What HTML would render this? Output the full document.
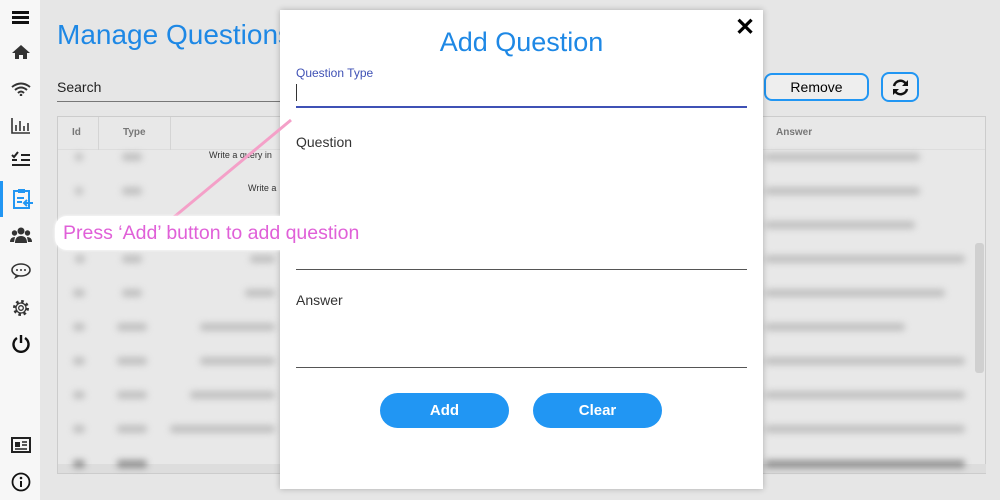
<!DOCTYPE html>
<html><head><style>
*{margin:0;padding:0;box-sizing:border-box}
body{width:1000px;height:500px;overflow:hidden;background:#e6e6e6;font-family:"Liberation Sans",sans-serif;position:relative}
.side{position:absolute;left:0;top:0;width:40px;height:500px;background:#f7f7f7}
.blur{position:absolute;height:8px;background:#b4b4b4;filter:blur(3.5px);border-radius:3px;opacity:.75}
.modal{position:absolute;left:280px;top:10px;width:483px;height:479px;background:#fff;box-shadow:0 0 6px rgba(0,0,0,.25)}
.lbl{position:absolute;left:16px;font-size:14px;color:#333}
.line{position:absolute;left:16px;width:451px;height:1px;background:#555}
.btn{position:absolute;top:383px;width:129px;height:35px;border-radius:18px;background:#2196f3;color:#fff;font-weight:bold;font-size:15px;text-align:center;line-height:36px}
</style></head><body>
<div class="side">
<div style="position:absolute;left:12px;top:11px;width:17px;height:3px;background:#111;box-shadow:0 5px 0 #111,0 10px 0 #111"></div>
<svg style="position:absolute;left:11px;top:44px" width="20" height="16" viewBox="0 0 20 16"><path d="M10 1 L1 9 H4 V15 H8 V11 H12 V15 H16 V9 H19 Z" fill="#333"/></svg>
<svg style="position:absolute;left:11px;top:82px" width="20" height="14" viewBox="0 0 20 14"><path d="M1 5 Q10 -2 19 5 M4 8 Q10 3 16 8 M7 11 Q10 8 13 11" stroke="#333" stroke-width="2" fill="none"/><circle cx="10" cy="13" r="1.3" fill="#333"/></svg>
<svg style="position:absolute;left:11px;top:117px" width="20" height="17" viewBox="0 0 20 17"><path d="M1 1 V16 H19 M5 8 V14 M9 4 V14 M13 9 V14 M17 6 V14" stroke="#333" stroke-width="1.6" fill="none"/></svg>
<svg style="position:absolute;left:11px;top:151px" width="20" height="16" viewBox="0 0 20 16"><path d="M1 4 L3 6 L7 1 M10 4 H19 M10 9 H19 M1 14 H19 M10 14 H19" stroke="#222" stroke-width="2" fill="none"/><path d="M1 9 H6" stroke="#222" stroke-width="2"/></svg>
<div style="position:absolute;left:0;top:181px;width:3px;height:36px;background:#2196f3"></div>
<svg style="position:absolute;left:12px;top:188px" width="22" height="22" viewBox="0 0 22 22"><rect x="2" y="3" width="15" height="17" fill="none" stroke="#2196f3" stroke-width="2"/><rect x="6" y="1" width="7" height="4" fill="#2196f3"/><path d="M5 10 H12 M5 14 H10 M21 15 H12 M15 12 L12 15 L15 18" stroke="#2196f3" stroke-width="2" fill="none"/></svg>
<svg style="position:absolute;left:10px;top:226px" width="22" height="18" viewBox="0 0 22 18"><circle cx="11" cy="5" r="3.5" fill="#333"/><circle cx="4.5" cy="7" r="2.7" fill="#333"/><circle cx="17.5" cy="7" r="2.7" fill="#333"/><path d="M5 17 Q5 10 11 10 Q17 10 17 17Z M0 16 Q0 11 5 11 L4 16Z M22 16 Q22 11 17 11 L18 16Z" fill="#333"/></svg>
<svg style="position:absolute;left:11px;top:263px" width="20" height="17" viewBox="0 0 20 17"><ellipse cx="10" cy="7" rx="9" ry="6" fill="none" stroke="#333" stroke-width="1.6"/><path d="M5 12 L3 16 L9 13" fill="#333"/><circle cx="6" cy="7" r="1" fill="#333"/><circle cx="10" cy="7" r="1" fill="#333"/><circle cx="14" cy="7" r="1" fill="#333"/></svg>
<svg style="position:absolute;left:11px;top:298px" width="20" height="20" viewBox="0 0 20 20"><circle cx="10" cy="10" r="6.5" fill="none" stroke="#333" stroke-width="3" stroke-dasharray="2.5 2.6"/><circle cx="10" cy="10" r="5" fill="none" stroke="#333" stroke-width="1.3"/><circle cx="10" cy="10" r="2.3" fill="none" stroke="#333" stroke-width="1.3"/></svg>
<svg style="position:absolute;left:11px;top:334px" width="20" height="19" viewBox="0 0 20 19"><path d="M6 4 A7.5 7.5 0 1 0 14 4" stroke="#111" stroke-width="2.4" fill="none"/><path d="M10 1 V9" stroke="#111" stroke-width="2.4"/></svg>
<svg style="position:absolute;left:11px;top:437px" width="20" height="16" viewBox="0 0 20 16"><rect x="1" y="1" width="18" height="14" fill="none" stroke="#222" stroke-width="2"/><rect x="4" y="5" width="5" height="5" fill="#222"/><path d="M11 5 H16 M11 8 H16 M4 12 H16" stroke="#222" stroke-width="1.5"/></svg>
<svg style="position:absolute;left:11px;top:472px" width="20" height="20" viewBox="0 0 20 20"><circle cx="10" cy="10" r="8.5" fill="none" stroke="#111" stroke-width="1.8"/><circle cx="10" cy="6" r="1.3" fill="#111"/><path d="M10 9 V15" stroke="#111" stroke-width="2"/></svg>
</div>
<div style="position:absolute;left:57px;top:19px;font-size:28px;color:#1e88e5">Manage Questions</div>
<div style="position:absolute;left:57px;top:79px;font-size:14px;color:#222">Search</div>
<div style="position:absolute;left:57px;top:101px;width:230px;height:1px;background:#777"></div>
<div style="position:absolute;left:764px;top:73px;width:105px;height:28px;border:2px solid #2196f3;border-radius:8px;background:#eee;text-align:center;line-height:24px;font-size:14px">Remove</div>
<div style="position:absolute;left:881px;top:72px;width:38px;height:30px;border:2px solid #2196f3;border-radius:8px;background:#eee"><svg style="position:absolute;left:9px;top:5px" width="17" height="17" viewBox="0 0 17 17"><path d="M2 7 A6.5 6.5 0 0 1 14 5 M15 10 A6.5 6.5 0 0 1 3 12" stroke="#111" stroke-width="2.5" fill="none"/><path d="M16 1 V7 H10Z M1 16 V10 H7Z" fill="#111"/></svg></div>
<div style="position:absolute;left:57px;top:116px;width:929px;height:358px;border:1px solid #ccc;background:#e8e8e8">
<div style="position:absolute;left:0;top:0;width:100%;height:33px;border-bottom:1px solid #ddd"></div>
<div style="position:absolute;left:40px;top:0;width:1px;height:33px;background:#d4d4d4"></div>
<div style="position:absolute;left:112px;top:0;width:1px;height:33px;background:#d4d4d4"></div>
<div style="position:absolute;left:14px;top:10px;font-size:10px;font-weight:bold;color:#777">Id</div>
<div style="position:absolute;left:65px;top:10px;font-size:10px;font-weight:bold;color:#777">Type</div>
<div style="position:absolute;left:718px;top:10px;font-size:10px;font-weight:bold;color:#777">Answer</div>
<div style="position:absolute;left:917px;top:126px;width:9px;height:130px;background:#d0d0d0;border-radius:3px"></div>
<div style="position:absolute;left:0;top:347px;width:928px;height:9px;background:#ddd"></div>
</div>
<div style="position:absolute;left:209px;top:150px;font-size:9px;color:#333">Write a query in</div>
<div style="position:absolute;left:248px;top:183px;font-size:9px;color:#333">Write a</div>
<div class="blur" style="left:75px;top:153px;width:8px"></div><div class="blur" style="left:122px;top:153px;width:20px"></div><div class="blur" style="left:765px;top:153px;width:155px"></div>
<div class="blur" style="left:75px;top:187px;width:8px"></div><div class="blur" style="left:122px;top:187px;width:20px"></div><div class="blur" style="left:765px;top:187px;width:155px"></div>
<div class="blur" style="left:765px;top:221px;width:150px"></div>
<div class="blur" style="left:75px;top:255px;width:10px"></div><div class="blur" style="left:122px;top:255px;width:20px"></div><div class="blur" style="left:250px;top:255px;width:25px"></div><div class="blur" style="left:765px;top:255px;width:200px"></div>
<div class="blur" style="left:73px;top:289px;width:12px"></div><div class="blur" style="left:122px;top:289px;width:20px"></div><div class="blur" style="left:245px;top:289px;width:30px"></div><div class="blur" style="left:765px;top:289px;width:180px"></div>
<div class="blur" style="left:73px;top:323px;width:12px"></div><div class="blur" style="left:117px;top:323px;width:30px"></div><div class="blur" style="left:200px;top:323px;width:75px"></div><div class="blur" style="left:765px;top:323px;width:140px"></div>
<div class="blur" style="left:73px;top:357px;width:12px"></div><div class="blur" style="left:117px;top:357px;width:30px"></div><div class="blur" style="left:200px;top:357px;width:75px"></div><div class="blur" style="left:765px;top:357px;width:200px"></div>
<div class="blur" style="left:73px;top:391px;width:12px"></div><div class="blur" style="left:117px;top:391px;width:30px"></div><div class="blur" style="left:190px;top:391px;width:85px"></div><div class="blur" style="left:765px;top:391px;width:200px"></div>
<div class="blur" style="left:73px;top:425px;width:12px"></div><div class="blur" style="left:117px;top:425px;width:30px"></div><div class="blur" style="left:170px;top:425px;width:105px"></div><div class="blur" style="left:765px;top:425px;width:200px"></div>
<div class="blur" style="left:73px;top:460px;width:12px;background:#777"></div><div class="blur" style="left:117px;top:460px;width:30px;background:#777"></div><div class="blur" style="left:765px;top:460px;width:200px;background:#777"></div>
<div class="modal">
<div style="position:absolute;left:0;top:17px;width:100%;text-align:center;font-size:27px;color:#1e88e5">Add Question</div>
<div style="position:absolute;left:455px;top:3px;font-size:24px;font-weight:bold;color:#000">✕</div>
<div style="position:absolute;left:16px;top:56px;font-size:12px;color:#3f51b5">Question Type</div>
<div style="position:absolute;left:16px;top:74px;width:1px;height:17px;background:#333"></div>
<div class="line" style="top:96px;height:2px;background:#3f51b5"></div>
<div class="lbl" style="top:124px">Question</div>
<div class="line" style="top:259px"></div>
<div class="lbl" style="top:282px">Answer</div>
<div class="line" style="top:357px"></div>
<div class="btn" style="left:100px">Add</div>
<div class="btn" style="left:253px">Clear</div>
</div>
<svg style="position:absolute;left:0;top:0" width="300" height="230"><line x1="291" y1="120" x2="174" y2="217" stroke="#f4a0c8" stroke-width="3"/></svg>
<div style="position:absolute;left:55px;top:216px;width:320px;height:34px;background:#fff;border-radius:12px;box-shadow:0 0 3px #fff"></div>
<div style="position:absolute;left:63px;top:222px;font-size:19.5px;color:#e060d8">Press ‘Add’ button to add question</div>
</body></html>
